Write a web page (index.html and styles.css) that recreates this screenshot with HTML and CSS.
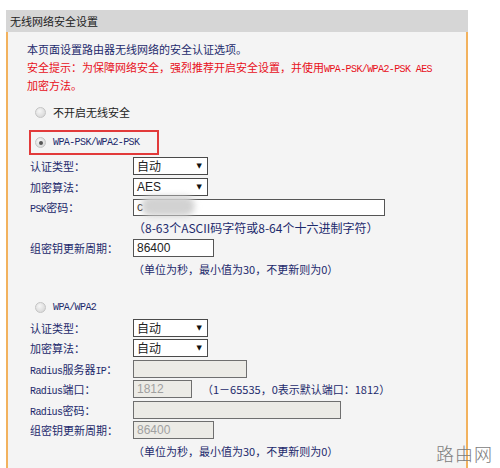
FILE: index.html
```html
<!DOCTYPE html>
<html lang="zh-CN">
<head>
    <meta charset="UTF-8">
    <title>无线网络安全设置</title>
    <link rel="stylesheet" href="styles.css">
</head>
<body>

<div class="panel">
    <div class="panel-head">无线网络安全设置</div>

    <div class="panel-body">
        <p class="intro">本页面设置路由器无线网络的安全认证选项。</p>
        <p class="warn">安全提示：为保障网络安全，强烈推荐开启安全设置，并使用<span class="en">WPA-PSK/WPA2-PSK AES</span><br>加密方法。</p>

        <!-- no security -->
        <div class="opt first"><span class="radio"></span>不开启无线安全</div>

        <!-- WPA-PSK / WPA2-PSK (selected) -->
        <div class="opt picked"><span class="radio on"></span><span class="en">WPA-PSK/WPA2-PSK</span></div>
        <div class="row">
            <span class="lbl">认证类型：</span>
            <span class="select">自动</span>
        </div>
        <div class="row">
            <span class="lbl">加密算法：</span>
            <span class="select latin">AES</span>
        </div>
        <div class="row">
            <span class="lbl"><span class="en">PSK</span>密码：</span>
            <span class="field">
                <input type="text" class="w-psk" value="c">
                <span class="smudge"></span>
            </span>
        </div>
        <div class="row hint big">（8-63个ASCII码字符或8-64个十六进制字符）</div>
        <div class="row">
            <span class="lbl">组密钥更新周期：</span>
            <input type="text" class="w-num" value="86400">
        </div>
        <div class="row hint">（单位为秒，最小值为30，不更新则为0）</div>

        <!-- WPA / WPA2 with radius -->
        <div class="opt third"><span class="radio"></span><span class="en">WPA/WPA2</span></div>
        <div class="row">
            <span class="lbl">认证类型：</span>
            <span class="select">自动</span>
        </div>
        <div class="row">
            <span class="lbl">加密算法：</span>
            <span class="select">自动</span>
        </div>
        <div class="row">
            <span class="lbl"><span class="en">Radius</span>服务器<span class="en">IP</span>：</span>
            <input type="text" class="w-ip" disabled>
        </div>
        <div class="row">
            <span class="lbl"><span class="en">Radius</span>端口：</span>
            <input type="text" class="w-port" value="1812" disabled>
            <span class="note">（1－65535，0表示默认端口：1812）</span>
        </div>
        <div class="row">
            <span class="lbl"><span class="en">Radius</span>密码：</span>
            <input type="text" class="w-pass" disabled>
        </div>
        <div class="row">
            <span class="lbl">组密钥更新周期：</span>
            <input type="text" class="w-num" value="86400" disabled>
        </div>
        <div class="row hint">（单位为秒，最小值为30，不更新则为0）</div>
    </div>
</div>

<div class="mark">路由网</div>

</body>
</html>
```

FILE: styles.css
```css
html, body {
    height: 100%;
}
body {
    margin: 0;
    background-color: #ffffff;
    font-family: "Noto Sans CJK SC", "Liberation Sans", sans-serif;
    font-size: 11px;
    color: #1d2a6c;
    overflow: hidden;
    position: relative;
}
.panel {
    margin: 10px 0 0 6px;
    width: 462px;
    height: calc(100% - 10px);
    display: flex;
    flex-direction: column;
}
.panel-head {
    height: 22px;
    line-height: 22px;
    padding-left: 4px;
    background-color: #d6d6d6;
    color: #222;
}
.panel-body {
    flex: 1;
    background-color: #f4f4f4;
    border-left: 2px solid #f2b25e;
    border-right: 2px solid #f2b25e;
    padding: 8px 0 0 19px;
}
p {
    margin: 0;
    line-height: 18px;
}
.warn {
    color: #e8101a;
}
/* ascii bits use a narrow typewriter face */
.en {
    font-family: "Liberation Mono", monospace;
    font-size: 10px;
    letter-spacing: -0.6px;
    line-height: 0;
}

/* radio options */
.opt {
    display: flex;
    align-items: center;
    height: 20px;
    padding-left: 8px;
    color: #222;
}
.opt.first {
    margin-top: 8px;
}
.opt.picked {
    margin: 8px 0 1px 2px;
    width: 122px;
    height: 21px;
    padding-left: 4px;
    border: 2px solid #e23a3a;
    color: #1d2a6c;
}
.opt.third {
    margin-top: 18.5px;
    color: #1d2a6c;
}
.radio {
    width: 11px;
    height: 11px;
    box-sizing: border-box;
    border-radius: 50%;
    border: 1px solid #c4c4c4;
    background: radial-gradient(circle at 40% 35%, #f6f6f6 0, #d8d8d8 80%);
    margin-right: 7px;
    position: relative;
}
.radio.on::after {
    content: "";
    position: absolute;
    left: 2.5px;
    top: 2.5px;
    width: 4px;
    height: 4px;
    border-radius: 50%;
    background-color: #555;
}

/* form rows */
.row {
    display: flex;
    align-items: center;
    height: 20.5px;
}
.lbl {
    width: 103px;
    padding-left: 3px;
    flex-shrink: 0;
}
.hint {
    padding-left: 106px;
}
.hint.big {
    font-size: 12px;
}
.note {
    margin-left: 10px;
}
.select {
    position: relative;
    box-sizing: border-box;
    width: 75px;
    height: 18px;
    line-height: 16px;
    padding-left: 3px;
    border: 1px solid #4a4a4a;
    background-color: #fff;
    color: #222;
    font-size: 12px;
}
.select.latin {
    font-family: "Liberation Sans", sans-serif;
}
.select::after {
    content: "▼";
    position: absolute;
    right: 5px;
    top: 0;
    font-family: "DejaVu Sans", sans-serif;
    font-size: 7px;
    color: #111;
}
input {
    box-sizing: border-box;
    height: 18px;
    margin: 0;
    padding: 0 0 0 3px;
    border: 1px solid #555;
    background-color: #fff;
    font-family: "Liberation Sans", sans-serif;
    font-size: 12px;
    color: #222;
}
input:disabled {
    background-color: #ecebe6;
    border-color: #6f6f6f;
    color: #a0a0a0;
}
.field {
    position: relative;
    display: flex;
}
.smudge {
    position: absolute;
    left: 8px;
    top: -3px;
    width: 54px;
    height: 20px;
    border-radius: 10px;
    background-color: #d2d2d2;
    filter: blur(3px);
}
.w-psk { width: 252px; height: 17px; }
.w-num { width: 81px; }
.w-ip { width: 114px; }
.w-port { width: 59px; }
.w-pass { width: 208px; }

/* site mark in the corner */
.mark {
    position: absolute;
    left: 436px;
    top: 440px;
    font-size: 18px;
    font-weight: 300;
    color: #7c7c7c;
    letter-spacing: 1px;
}
```
